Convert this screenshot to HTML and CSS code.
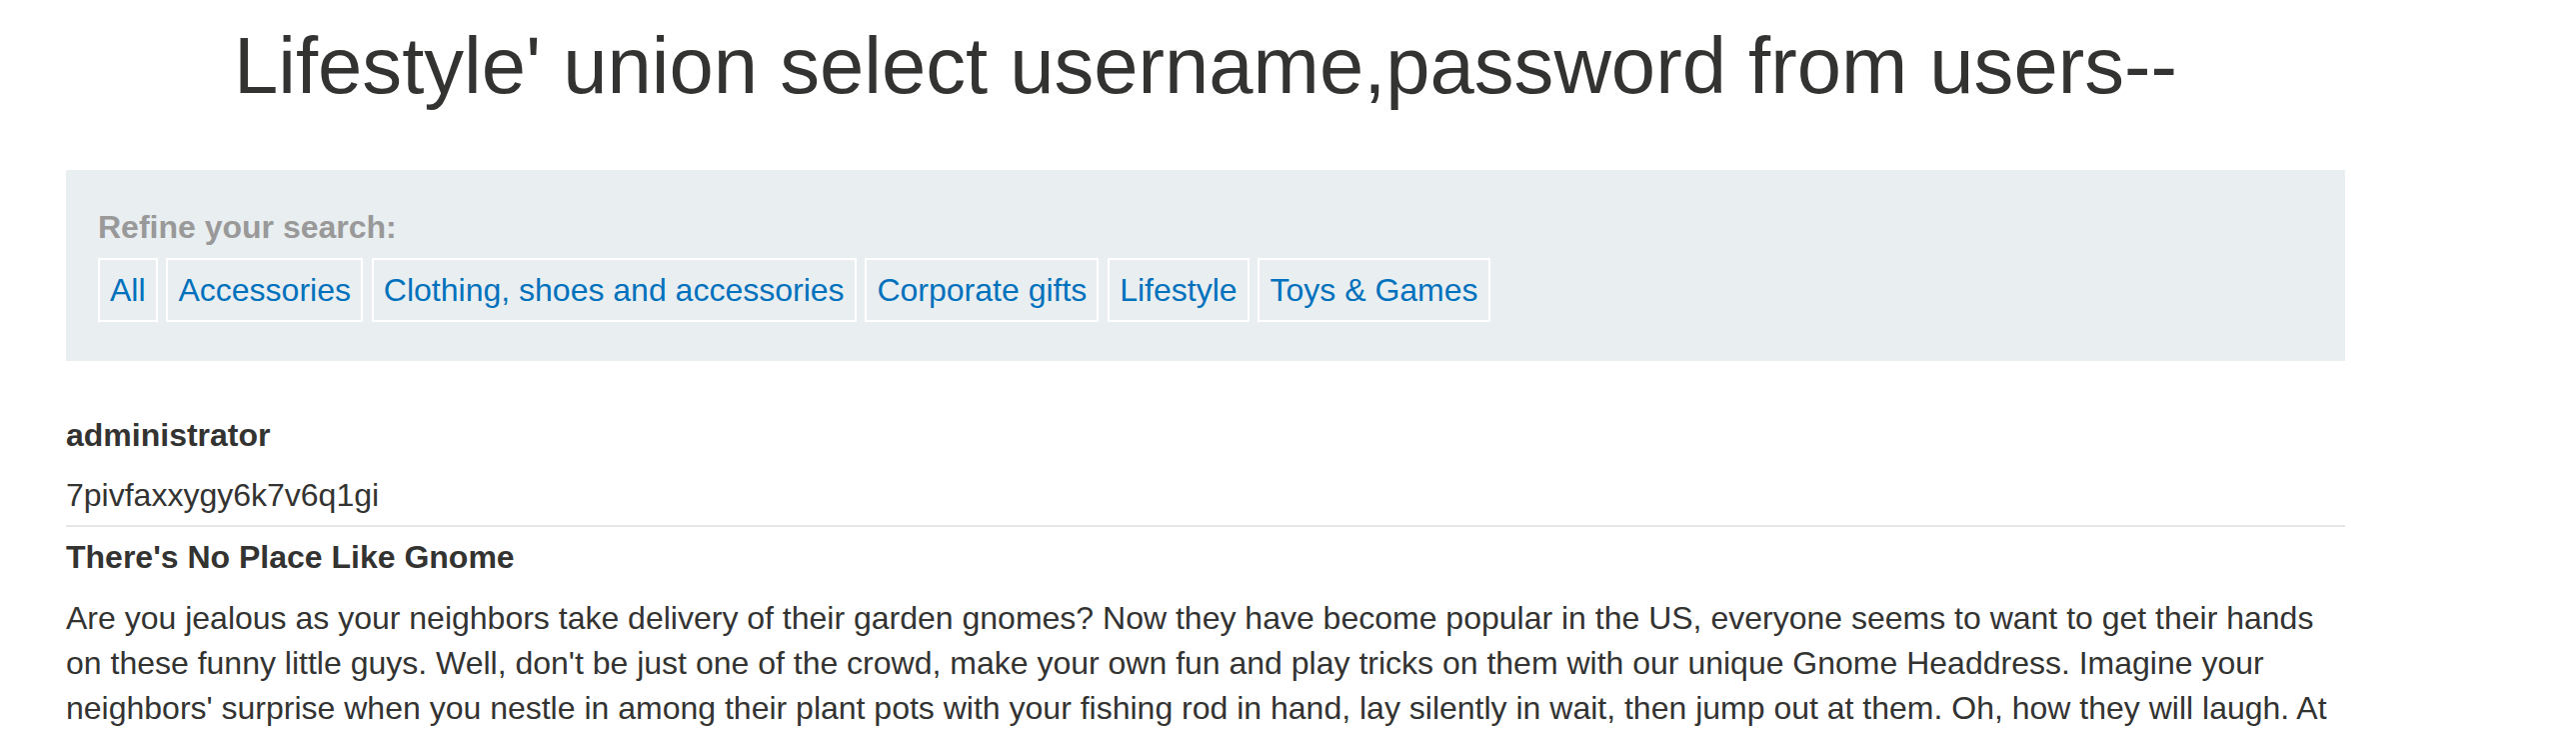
FILE: index.html
```html
<!DOCTYPE html>
<html lang="en">
<head>
<meta charset="utf-8">
<title>Lifestyle' union select username,password from users--</title>
<link rel="stylesheet" href="styles.css">
</head>
<body>
<div class="container">
  <h1 class="page-title">Lifestyle' union select username,password from users--</h1>
  <section class="filter">
    <div class="filter-label">Refine your search:</div>
    <div class="filter-links">
      <a class="filter-btn" href="#">All</a>
      <a class="filter-btn" href="#">Accessories</a>
      <a class="filter-btn" href="#">Clothing, shoes and accessories</a>
      <a class="filter-btn" href="#">Corporate gifts</a>
      <a class="filter-btn" href="#">Lifestyle</a>
      <a class="filter-btn" href="#">Toys &amp; Games</a>
    </div>
  </section>
  <div class="results">
    <div class="row row-divided">
      <div class="cell cell-head">administrator</div>
      <div class="cell">7pivfaxxygy6k7v6q1gi</div>
    </div>
    <div class="row">
      <div class="cell cell-head">There's No Place Like Gnome</div>
      <div class="cell cell-desc">Are you jealous as your neighbors take delivery of their garden gnomes? Now they have become popular in the US, everyone seems to want to get their hands on these funny little guys. Well, don't be just one of the crowd, make your own fun and play tricks on them with our unique Gnome Headdress. Imagine your neighbors' surprise when you nestle in among their plant pots with your fishing rod in hand, lay silently in wait, then jump out at them. Oh, how they will laugh. At least they will until they realize it is just you hiding in the flower beds again, and then the fun really begins.</div>
    </div>
  </div>
</div>
</body>
</html>
```
FILE: styles.css
```css
html, body {
  margin: 0;
  padding: 0;
  background: #ffffff;
}

body {
  font-family: "Liberation Sans", Arial, sans-serif;
  color: #333332;
  font-size: 32px;
  line-height: 1.4;
}

.container {
  width: 2280px;
  margin-left: 66px;
}

.page-title {
  margin: 9.6px 0 48.4px;
  font-size: 79.6px;
  line-height: 112px;
  font-weight: normal;
  text-align: center;
  color: #333332;
  white-space: nowrap;
}

.filter {
  background: #e9eef1;
  padding: 35px 32px 38.4px;
}

.filter-label {
  font-weight: bold;
  color: #999999;
  line-height: 44.8px;
}

.filter-links {
  display: flex;
  gap: 8.9px;
  margin-top: 8.5px;
}

.filter-btn {
  display: block;
  padding: 7.6px 10px;
  border: 2px solid #ffffff;
  color: #0071bc;
  text-decoration: none;
  line-height: 44.8px;
}

.results {
  margin-top: 44.3px;
}

.row-divided {
  border-bottom: 2px solid #e6e6e6;
}

.cell {
  padding: 7.6px 0;
  line-height: 44.8px;
}

.cell-head {
  font-weight: bold;
}

.cell-desc {
  padding-top: 8.6px;
  line-height: 45.3px;
}
```
